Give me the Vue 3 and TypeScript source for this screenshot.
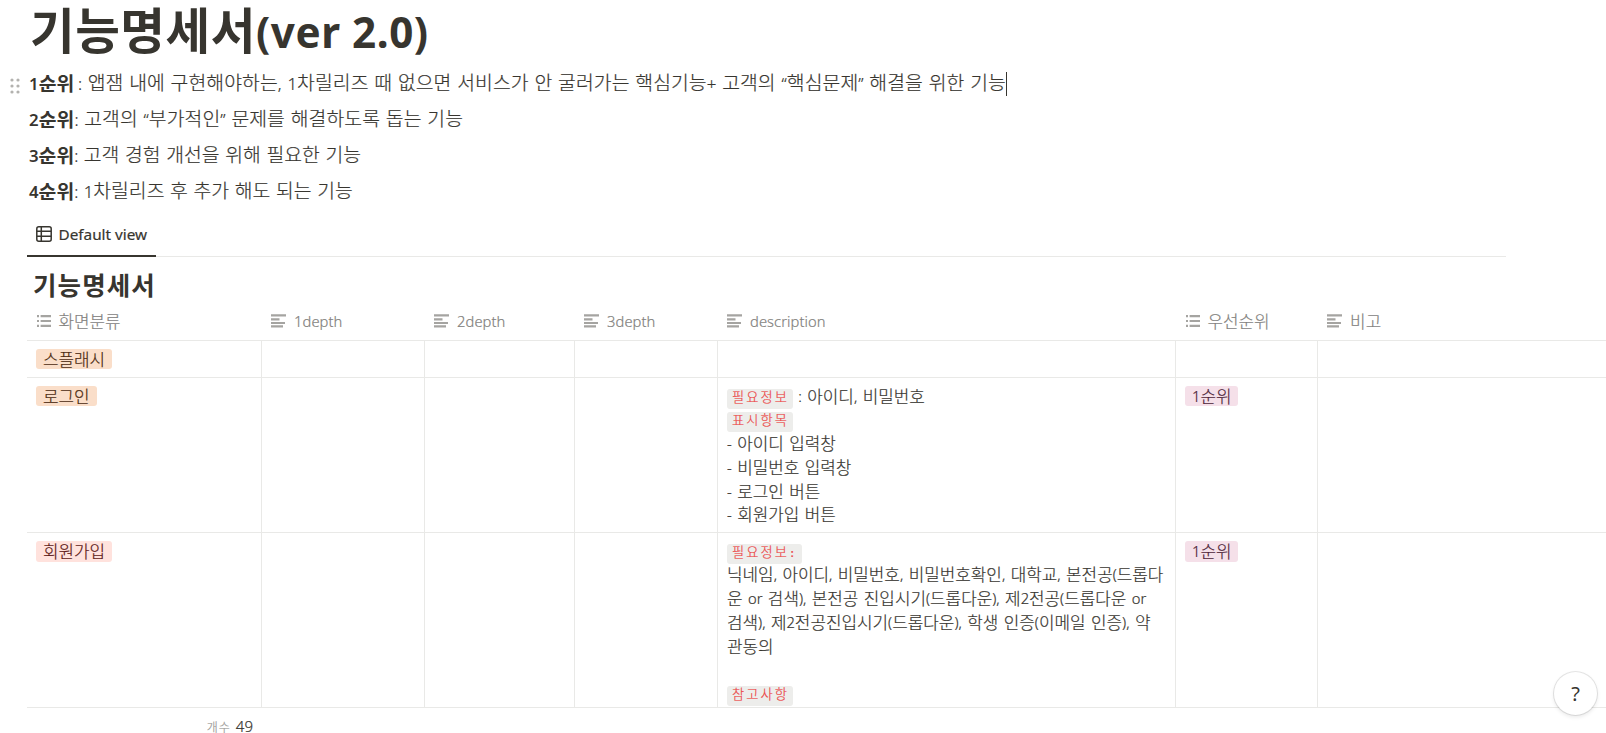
<script setup lang="ts">
import { defineComponent, h } from 'vue'

// Hangul and Latin runs use different families and sizes.
const Runs = defineComponent({
  props: { text: { type: String, required: true } },
  setup(props) {
    return () =>
      (props.text.match(/[가-힣]+|[^가-힣]+/g) ?? []).map((run) =>
        h('span', { class: /[가-힣]/.test(run) ? 'ko' : 'en' }, run),
      )
  },
})

interface Column {
  label: string
  icon: 'list' | 'text'
}
interface Part {
  text: string
  code?: boolean
}
interface Row {
  height: string
  tag: string
  tone: string
  lines: Part[][]
  priority?: string
}

const notes = [
  { rank: '1순위', colon: ' :', body: ' 앱잼 내에 구현해야하는, 1차릴리즈 때 없으면 서비스가 안 굴러가는 핵심기능+ 고객의 “핵심문제” 해결을 위한 기능', active: true },
  { rank: '2순위', colon: ':', body: ' 고객의 “부가적인” 문제를 해결하도록 돕는 기능', active: false },
  { rank: '3순위', colon: ':', body: ' 고객 경험 개선을 위해 필요한 기능', active: false },
  { rank: '4순위', colon: ':', body: ' 1차릴리즈 후 추가 해도 되는 기능', active: false },
]

const columns: Column[] = [
  { label: '화면분류', icon: 'list' },
  { label: '1depth', icon: 'text' },
  { label: '2depth', icon: 'text' },
  { label: '3depth', icon: 'text' },
  { label: 'description', icon: 'text' },
  { label: '우선순위', icon: 'list' },
  { label: '비고', icon: 'text' },
]

const rows: Row[] = [
  { height: 'short', tag: '스플래시', tone: 'orange', lines: [] },
  {
    height: 'medium',
    tag: '로그인',
    tone: 'orange',
    lines: [
      [{ text: '필요정보', code: true }, { text: ' : 아이디, 비밀번호' }],
      [{ text: '표시항목', code: true }],
      [{ text: '- 아이디 입력창' }],
      [{ text: '- 비밀번호 입력창' }],
      [{ text: '- 로그인 버튼' }],
      [{ text: '- 회원가입 버튼' }],
    ],
    priority: '1순위',
  },
  {
    height: 'tall',
    tag: '회원가입',
    tone: 'red',
    lines: [
      [{ text: '필요정보:', code: true }],
      [{ text: '닉네임, 아이디, 비밀번호, 비밀번호확인, 대학교, 본전공(드롭다' }],
      [{ text: '운 or 검색), 본전공 진입시기(드롭다운), 제2전공(드롭다운 or' }],
      [{ text: '검색), 제2전공진입시기(드롭다운), 학생 인증(이메일 인증), 약' }],
      [{ text: '관동의' }],
      [],
      [{ text: '참고사항', code: true }],
    ],
    priority: '1순위',
  },
]
</script>

<template>
  <main class="page">
    <h1 class="title"><Runs text="기능명세서(ver 2.0)" /></h1>

    <section class="notes">
      <div v-for="n in notes" :key="n.rank" class="note">
        <span class="gutter">
          <svg v-if="n.active" width="10" height="16" viewBox="0 0 10 16" fill="#b3b2af">
            <template v-for="y in [2, 8, 14]" :key="y">
              <circle cx="2" :cy="y" r="1.6" /><circle cx="8" :cy="y" r="1.6" />
            </template>
          </svg>
        </span>
        <p><b><Runs :text="n.rank" /></b><span class="colon">{{ n.colon }}</span><Runs :text="n.body" /><i v-if="n.active" class="caret"></i></p>
      </div>
    </section>

    <nav class="tabs">
      <div class="tab">
        <svg width="16" height="16" viewBox="0 0 16 16" fill="none" stroke="#37352f" stroke-width="1.5">
          <rect x=".8" y=".8" width="14.4" height="14.4" rx="2" />
          <path d="M1 5.3h14M1 10.3h14M5.3 1v14" />
        </svg>
        <span>Default view</span>
      </div>
    </nav>

    <h2 class="subtitle"><Runs text="기능명세서" /></h2>

    <div class="grid head">
      <div v-for="c in columns" :key="c.label" class="th" :class="c.icon">
        <svg v-if="c.icon === 'list'" width="15" height="14" viewBox="0 0 15 14" fill="#a5a4a1">
          <path d="M1 1h2v2.2H1zM1 5.9h2v2.2H1zM1 10.8h2v2.2H1zM4.6 1H15v2.2H4.6zM4.6 5.9H15v2.2H4.6zM4.6 10.8H15v2.2H4.6z" />
        </svg>
        <svg v-else width="15" height="14" viewBox="0 0 15 14" fill="#a5a4a1">
          <path d="M0 .3h15v2.2H0zM0 4.2h8.5v2.2H0zM0 7.9h14v2.2H0zM0 11.3h12v2.2H0z" />
        </svg>
        <span class="label"><Runs :text="c.label" /></span>
      </div>
    </div>

    <div v-for="r in rows" :key="r.tag" class="grid row" :class="r.height">
      <div class="cell"><span class="tag" :class="r.tone"><Runs :text="r.tag" /></span></div>
      <div class="cell"></div>
      <div class="cell"></div>
      <div class="cell"></div>
      <div class="cell desc">
        <div v-for="(line, i) in r.lines" :key="i" class="line">
          <template v-for="(p, j) in line" :key="j">
            <code v-if="p.code"><Runs :text="p.text" /></code>
            <Runs v-else :text="p.text" />
          </template>
        </div>
      </div>
      <div class="cell"><span v-if="r.priority" class="tag pink"><Runs :text="r.priority" /></span></div>
      <div class="cell last"></div>
    </div>

    <footer class="count"><span class="count-label">개수</span><span class="count-value">49</span></footer>

    <button class="help">?</button>
  </main>
</template>

<style>
body {
  background: #fff;
  overflow: hidden;
}
.en,
.ko {
  line-height: 0;
  white-space: pre;
}
.ko {
  font-family: 'Noto Sans CJK KR', sans-serif;
  font-size: 1.15em;
  vertical-align: -0.03em;
}
</style>

<style scoped>
.page {
  position: relative;
  box-sizing: border-box;
  width: 1606px;
  height: 733px;
  overflow: hidden;
  color: #37352f;
  font-family: 'Noto Sans', 'Noto Sans CJK KR', sans-serif;
  font-size: 14.7px;
  font-weight: 300;
  word-spacing: 1.6px;
  -webkit-text-stroke: 0.2px currentColor;
}
.title {
  margin: 0 0 0 30px;
  height: 66px;
  font-size: 42.2px;
  line-height: 63px;
  font-weight: 700;
  letter-spacing: 0.55px;
  word-spacing: 0;
  -webkit-text-stroke: 0;
}
.note {
  display: flex;
  align-items: center;
  height: 36px;
  font-size: 16.8px;
  word-spacing: 1.3px;
}
.note:nth-child(-n + 2) {
  letter-spacing: 0.09px;
}
.gutter {
  width: 19px;
  margin-left: 10px;
  height: 16px;
}
.note p {
  margin: 0;
  line-height: 36px;
  white-space: pre;
  display: flex;
  align-items: baseline;
}
.note b {
  font-weight: 600;
  -webkit-text-stroke: 0;
}
.colon {
  line-height: 0;
  word-spacing: -1px;
  margin-right: -0.2px;
}
.caret {
  width: 1px;
  height: 24px;
  background: #37352f;
  align-self: center;
}
.tabs {
  display: flex;
  box-sizing: border-box;
  width: 1479px;
  height: 47px;
  margin-left: 27px;
  border-bottom: 1px solid #e9e9e7;
}
.tab {
  display: flex;
  align-items: center;
  gap: 6.5px;
  box-sizing: border-box;
  width: 129px;
  height: 47px;
  padding: 3px 0 0 9px;
  border-bottom: 2px solid #37352f;
  font-size: 15.3px;
  font-weight: 400;
  word-spacing: 0;
  white-space: nowrap;
}
.subtitle {
  margin: 0 0 0 33px;
  height: 47px;
  line-height: 58px;
  font-size: 22.2px;
  letter-spacing: 1.1px;
  font-weight: 700;
  -webkit-text-stroke: 0;
}
.grid {
  display: grid;
  grid-template-columns: 235px 163px 150px 143px 458px 142px 1fr;
  margin-left: 27px;
  border-bottom: 1px solid #e9e9e7;
}
.head {
  height: 36px;
  color: #82817d;
}
.th {
  display: flex;
  align-items: center;
  gap: 8px;
  padding-left: 9px;
}
.th.list {
  gap: 7.5px;
}
.th svg {
  margin-top: -2px;
}
.label {
  line-height: 34px;
  margin-top: -2px;
}
.th.text .label {
  letter-spacing: 0.1px;
}
.short {
  height: 36px;
}
.medium {
  height: 154px;
}
.tall {
  height: 174px;
}
.cell {
  box-sizing: border-box;
  padding: 8px 9px 0;
  border-right: 1px solid #e9e9e7;
  overflow: hidden;
}
.cell.last {
  border-right: 0;
}
.desc {
  padding-top: 6.5px;
}
.line {
  height: 23.75px;
  line-height: 23.75px;
  white-space: pre;
}
.tag {
  display: block;
  width: fit-content;
  height: 20px;
  line-height: 21px;
  padding: 0 7px;
  border-radius: 3px;
}
.tall .tag {
  height: 21px;
}
.orange {
  background: #fadec9;
  color: #49290e;
}
.red {
  background: #ffe2dd;
  color: #5d1715;
}
.pink {
  background: #f5e0e9;
  color: #4c2337;
}
code {
  display: inline-block;
  height: 20px;
  line-height: 20px;
  padding: 0 4px 0 5px;
  border-radius: 3px;
  background: #ededeb;
  color: #eb4747;
  font-family: 'Liberation Mono', monospace;
  font-size: 11.5px;
  letter-spacing: 2.05px;
}
.count {
  display: flex;
  justify-content: flex-end;
  align-items: baseline;
  gap: 5px;
  width: 226px;
  height: 25px;
  line-height: 37px;
  margin-left: 27px;
}
.count-label {
  color: #9b9a97;
  font-size: 12px;
  letter-spacing: 1px;
}
.count-value {
  font-size: 15px;
}
.help {
  position: absolute;
  left: 1554px;
  top: 672px;
  width: 43px;
  height: 43px;
  padding: 0;
  border: 0;
  border-radius: 50%;
  background: #fff;
  color: #37352f;
  font: 400 20px 'Noto Sans', sans-serif;
  -webkit-text-stroke: 0;
  box-shadow: 0 0 0 1px rgba(15, 15, 15, 0.1), 0 2px 4px rgba(15, 15, 15, 0.1);
}
</style>
